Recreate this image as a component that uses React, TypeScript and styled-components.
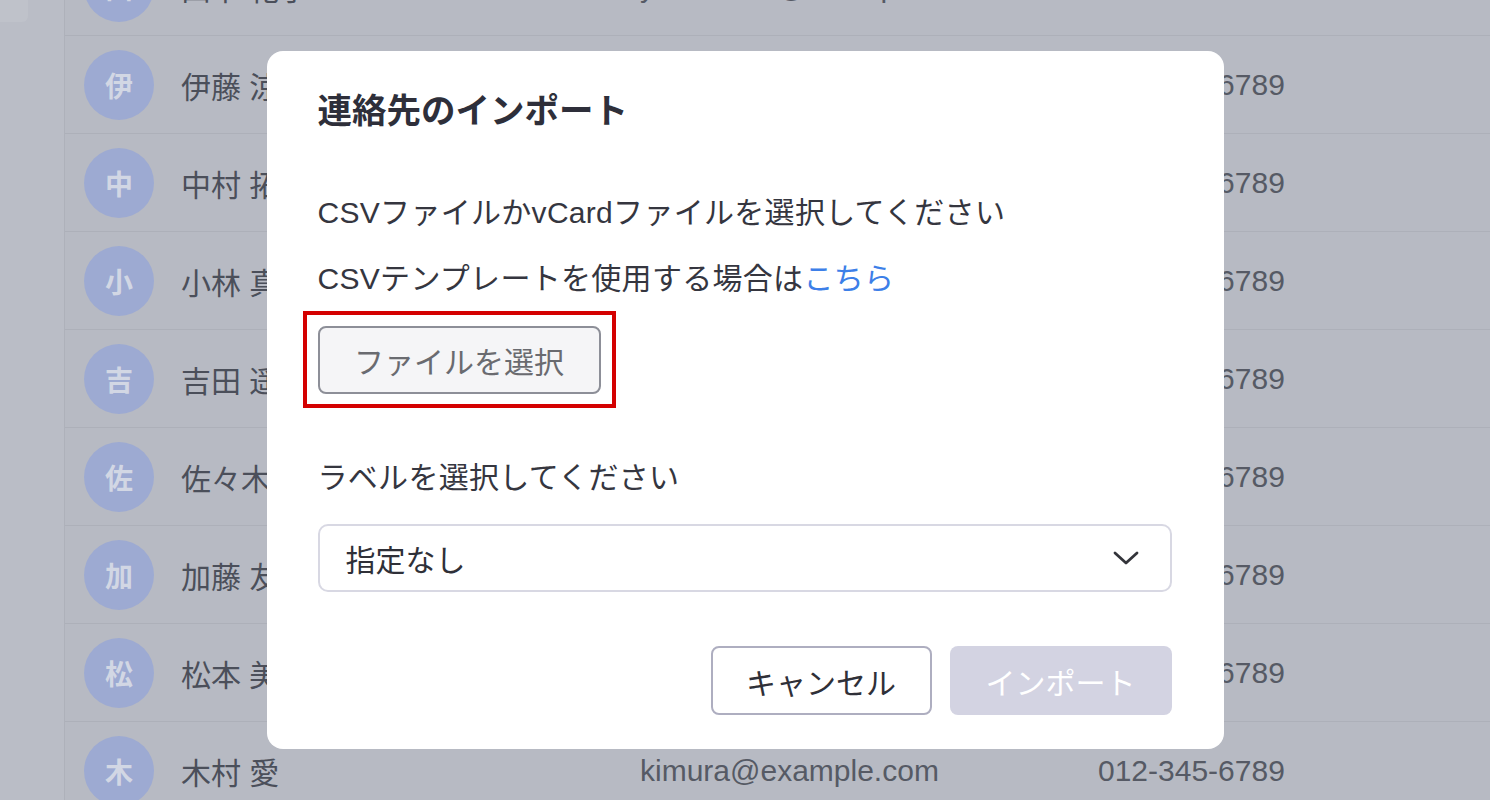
import styled, { createGlobalStyle } from 'styled-components';

const GlobalStyle = createGlobalStyle`
  html, body {
    margin: 0;
    padding: 0;
    width: 100%;
    height: 100%;
    overflow: hidden;
  }
  body {
    font-family: 'Liberation Sans', 'Noto Sans CJK JP', sans-serif;
  }
  * { box-sizing: border-box; }
`;

interface Contact {
  initial: string;
  name: string;
  email: string;
  phone: string;
}

const contacts: Contact[] = [
  { initial: '山', name: '山下 花子', email: 'yamashita@example.com', phone: '012-345-6789' },
  { initial: '伊', name: '伊藤 涼子', email: 'ito@example.com', phone: '012-345-6789' },
  { initial: '中', name: '中村 拓也', email: 'nakamura@example.com', phone: '012-345-6789' },
  { initial: '小', name: '小林 真由美', email: 'kobayashi@example.com', phone: '012-345-6789' },
  { initial: '吉', name: '吉田 遥', email: 'yoshida@example.com', phone: '012-345-6789' },
  { initial: '佐', name: '佐々木 健', email: 'sasaki@example.com', phone: '012-345-6789' },
  { initial: '加', name: '加藤 友美', email: 'kato@example.com', phone: '012-345-6789' },
  { initial: '松', name: '松本 美咲', email: 'matsumoto@example.com', phone: '012-345-6789' },
  { initial: '木', name: '木村 愛', email: 'kimura@example.com', phone: '012-345-6789' },
];

const ContactRow = ({ contact }: { contact: Contact }) => {
  return (
    <Row>
      <Avatar>{contact.initial}</Avatar>
      <Name>{contact.name}</Name>
      <Email>{contact.email}</Email>
      <Phone>{contact.phone}</Phone>
    </Row>
  );
};

const ChevronDown = () => (
  <svg width='26' height='16' viewBox='0 0 26 16' fill='none'>
    <polyline
      points='2,3 13,13 24,3'
      stroke='#33343a'
      strokeWidth='2.8'
      strokeLinecap='round'
      strokeLinejoin='round'
    />
  </svg>
);

const App = () => {
  return (
    <>
      <GlobalStyle />
      <Page>
        <Sidebar>
          <SideTile />
        </Sidebar>
        <Main>
          <List>
            {contacts.map((c) => (
              <ContactRow key={c.email} contact={c} />
            ))}
          </List>
        </Main>
      </Page>

      <Scrim>
        <Dialog>
          <Title>連絡先のインポート</Title>
          <Text>CSVファイルかvCardファイルを選択してください</Text>
          <Text $gap>
            CSVテンプレートを使用する場合は<LinkText href='#'>こちら</LinkText>
          </Text>
          <Highlight>
            <FileButton type='button'>ファイルを選択</FileButton>
          </Highlight>

          <Label>ラベルを選択してください</Label>
          <Select>
            <span>指定なし</span>
            <ChevronDown />
          </Select>

          <Footer>
            <Button type='button'>キャンセル</Button>
            <Button type='button' $primary disabled>
              インポート
            </Button>
          </Footer>
        </Dialog>
      </Scrim>
    </>
  );
};

const Page = styled.div`
  display: flex;
  width: 1490px;
  height: 800px;
  background: #b7bac3;
  overflow: hidden;
`;

const Sidebar = styled.aside`
  flex: 0 0 65px;
  background: #babdc6;
  border-right: 1px solid #aeb1ba;
`;

const SideTile = styled.div`
  width: 28px;
  height: 22px;
  background: #bfc2ca;
  border-bottom-right-radius: 6px;
`;

const Main = styled.main`
  flex: 1;
  overflow: hidden;
`;

/* list is scrolled a little: first row sits partly above the fold */
const List = styled.div`
  margin-top: -62px;
`;

const Row = styled.div`
  display: flex;
  align-items: center;
  height: 98px;
  padding-left: 19px;
  border-bottom: 1px solid #adb0b9;
  font-size: 30px;
`;

const Avatar = styled.div`
  flex: 0 0 70px;
  height: 70px;
  border-radius: 50%;
  background: #9daad2;
  color: #d2d7e4;
  font-family: 'Noto Sans CJK JP', sans-serif;
  font-weight: 700;
  font-size: 28px;
  display: flex;
  align-items: center;
  justify-content: center;
  margin-right: 27px;
`;

const Name = styled.div`
  flex: 0 0 459px;
  color: #4b4f5a;
`;

const Email = styled.div`
  flex: 0 0 458px;
  color: #565a65;
`;

const Phone = styled.div`
  color: #565a65;
`;

const Scrim = styled.div`
  position: fixed;
  inset: 0;
  display: flex;
  align-items: center;
  justify-content: center;
`;

const Dialog = styled.div`
  width: 957px;
  background: #fff;
  border-radius: 16px;
  padding: 36px 52px 34px 51px;
  display: flex;
  flex-direction: column;
  align-items: flex-start;
  font-family: 'Liberation Sans', 'Noto Sans CJK JP', sans-serif;
`;

const Title = styled.h2`
  margin: 0 0 55px;
  font-size: 34.5px;
  line-height: 1.4;
  font-weight: 700;
  color: #2e2f3a;
`;

const Text = styled.p<{ $gap?: boolean }>`
  margin: ${(p) => (p.$gap ? '21px 0 0' : '0')};
  font-size: 30px;
  line-height: 45px;
  letter-spacing: 0.3px;
  color: #35363f;
`;

const LinkText = styled.a`
  color: #3d7fe8;
  text-decoration: none;
`;

const Highlight = styled.div`
  position: relative;
  margin-top: 25px;
  display: inline-flex;

  &::after {
    content: '';
    position: absolute;
    top: -15px;
    left: -15px;
    right: -15px;
    bottom: -14px;
    border: 4px solid #d40000;
    pointer-events: none;
  }
`;

const FileButton = styled.button`
  width: 283px;
  height: 68px;
  padding: 0;
  background: #f5f5f7;
  border: 2px solid #8d8f98;
  border-radius: 8px;
  font-family: 'Liberation Sans', 'Noto Sans CJK JP', sans-serif;
  font-size: 30px;
  color: #6a6b70;
`;

const Label = styled.div`
  margin-top: 61px;
  font-size: 30px;
  line-height: 45px;
  letter-spacing: 0.3px;
  color: #35363f;
`;

const Select = styled.div`
  margin-top: 24px;
  width: 100%;
  height: 68px;
  border: 2px solid #d8d8e3;
  border-radius: 10px;
  display: flex;
  align-items: center;
  justify-content: space-between;
  padding: 0 31px 0 26px;
  font-size: 30px;
  color: #2f3038;
`;

const Footer = styled.div`
  margin-top: 54px;
  width: 100%;
  display: flex;
  justify-content: flex-end;
  gap: 18px;
`;

const Button = styled.button<{ $primary?: boolean }>`
  width: ${(p) => (p.$primary ? '222px' : '221px')};
  height: 69px;
  padding: 0;
  border-radius: 8px;
  font-family: 'Liberation Sans', 'Noto Sans CJK JP', sans-serif;
  font-size: 30px;
  background: ${(p) => (p.$primary ? '#d3d3e2' : '#fff')};
  color: ${(p) => (p.$primary ? '#fff' : '#2f3038')};
  border: ${(p) => (p.$primary ? 'none' : '2px solid #aeaec0')};
`;

export default App;
